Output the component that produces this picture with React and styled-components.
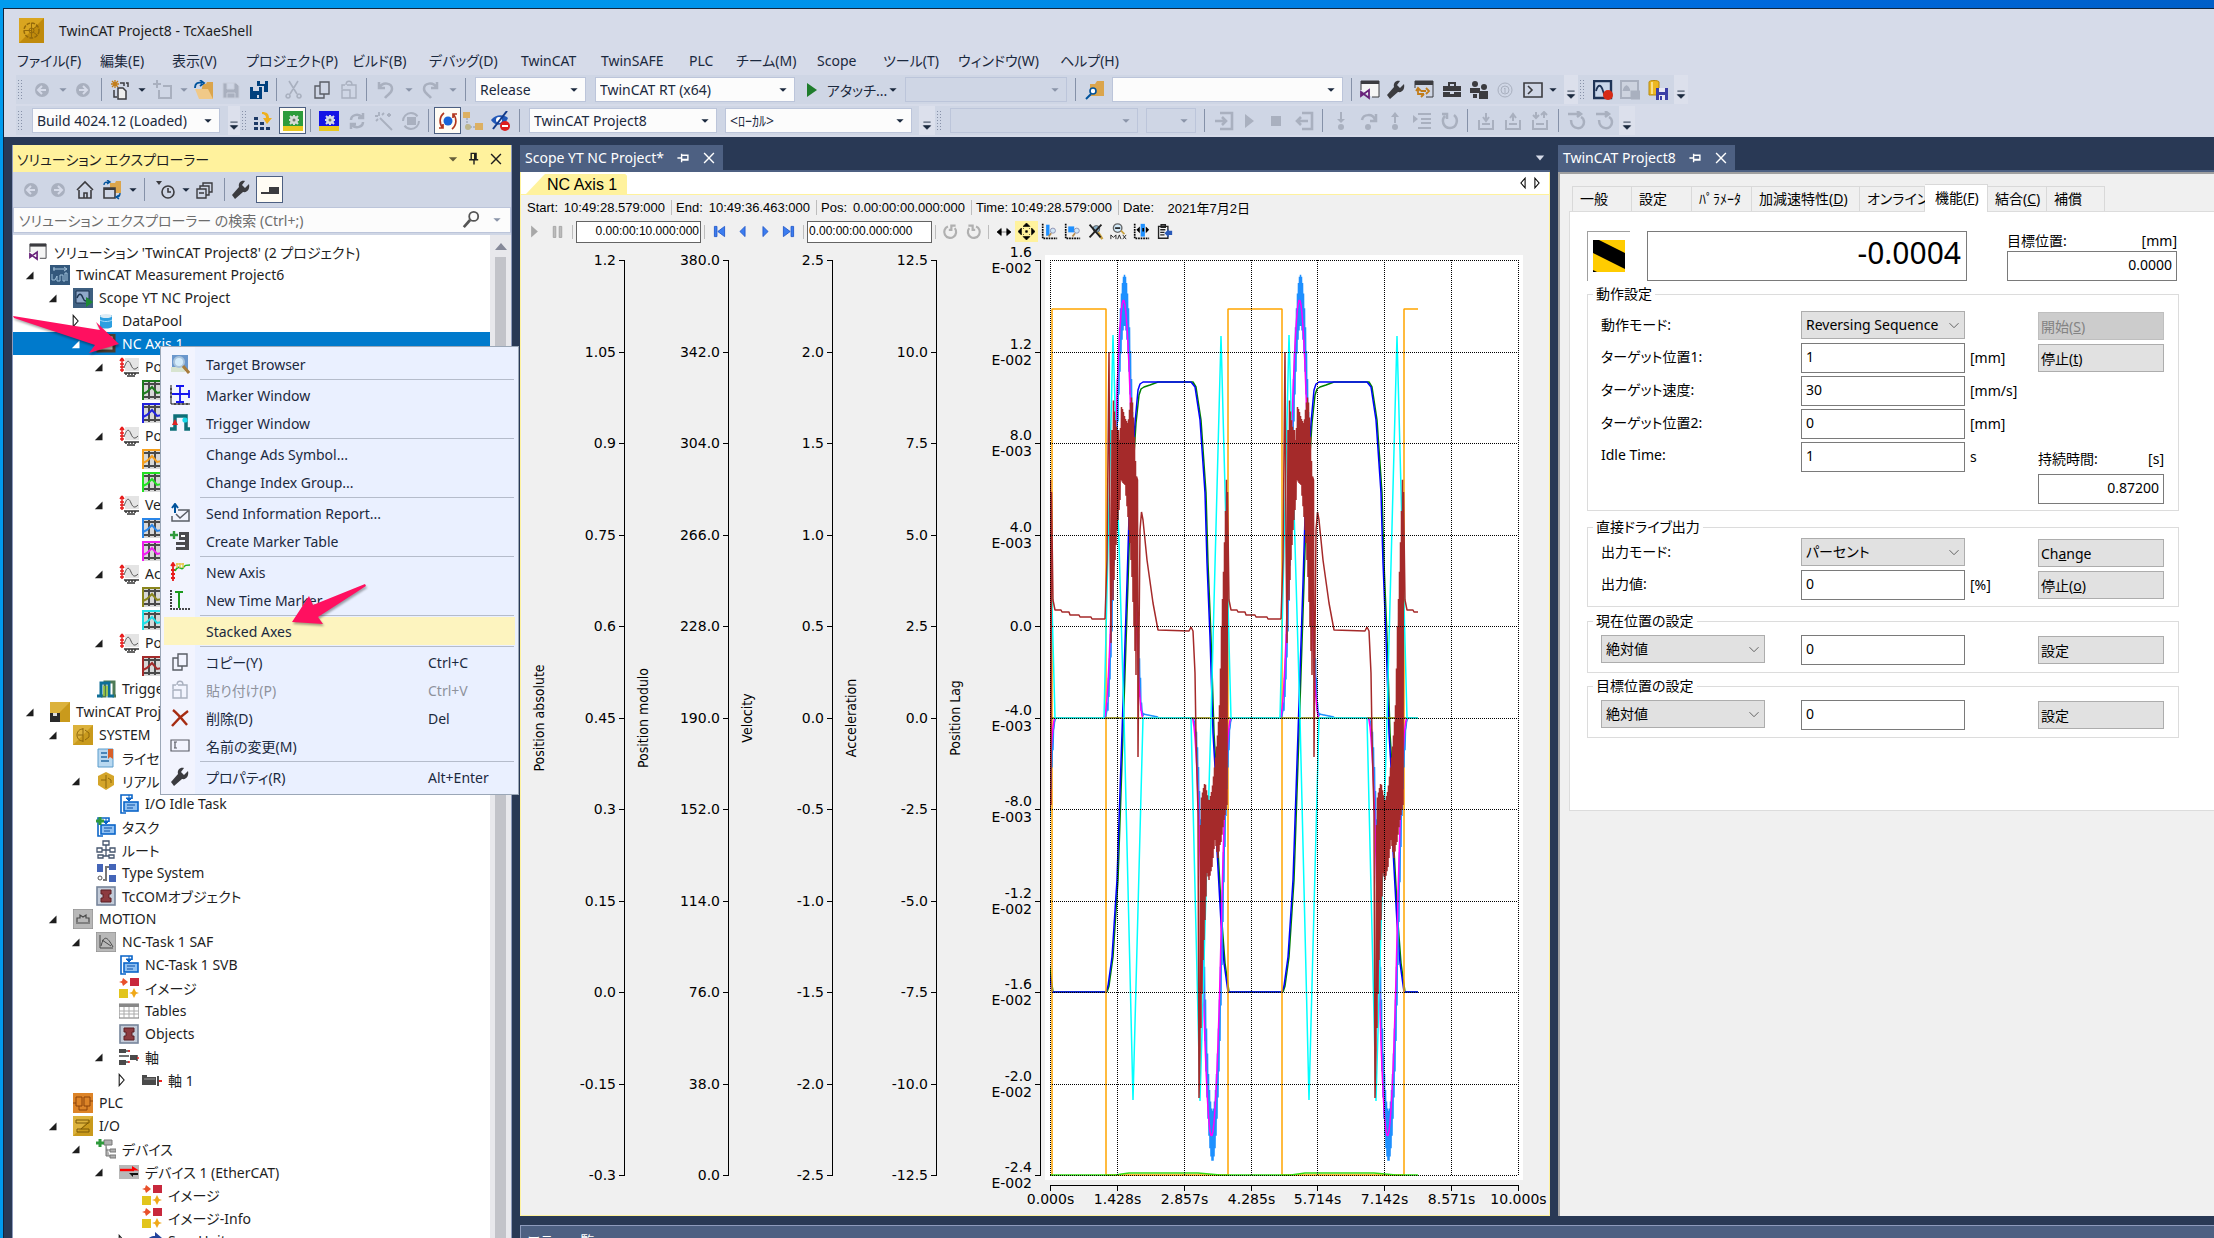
import React, { Component } from 'react';
import styled, { createGlobalStyle, css } from 'styled-components';

const uiFont = "'Noto Sans', 'Noto Sans CJK JP', sans-serif";
const scopeFont = "'Liberation Sans', 'Noto Sans CJK JP', sans-serif";

const GlobalStyle = createGlobalStyle`
  * {
    box-sizing: border-box;
  }

  body {
    margin: 0;
    overflow: hidden;
    font-family: ${uiFont};
    font-size: 14px;
    font-feature-settings: 'palt';
    color: #1e1e1e;
  }

  button, input, select {
    font: inherit;
    font-feature-settings: inherit;
    color: inherit;
    margin: 0;
    border-radius: 0;
  }

  button {
    border: 0;
    padding: 0;
    background: none;
  }
`;

/* ---------- shell ---------- */

const Desktop = styled.div`
  height: 100vh;
  padding: 8px 0 0 3px;
  background: linear-gradient(90deg, #009bee 0%, #0092ea 40%, #0069dc 80%, #005fc8 100%);
`;

const Window = styled.div`
  height: 100%;
  display: flex;
  flex-direction: column;
  border-top: 1px solid #10263f;
  border-left: 1px solid #10263f;
  background: #293955;
`;

const Header = styled.header`
  flex: none;
  padding-bottom: 2px;
  background: #d6dbe9;
`;

const TitleBar = styled.div`
  display: flex;
  align-items: center;
  gap: 15px;
  height: 42px;
  padding-left: 15px;
`;

const MenuBar = styled.nav`
  display: flex;
  height: 21px;
  margin-bottom: 3px;
  padding: 0 0 2px 13px;
`;

const MenuButton = styled.button`
  width: ${props => props.$w}px;
  flex: none;
  text-align: left;
  white-space: nowrap;
  line-height: 19px;
  color: #1b293e;
`;

const ToolRow = styled.div`
  display: flex;
  width: fit-content;
  height: 29px;
  margin: 0 0 2px 12px;
  background: #cfd6e5;

  &:last-child {
    margin-bottom: 0;
  }
`;

const Spacer = styled.span`
  flex: none;
  width: ${props => props.$w}px;
`;

const Grip = styled.span`
  flex: none;
  width: 5px;
  margin: 4px 3px 4px 1px;
  background-image: radial-gradient(#8791a8 1px, transparent 1px);
  background-size: 3px 3px;
`;

const Divider = styled.span`
  flex: none;
  display: flex;
  justify-content: center;
  width: ${props => props.$w}px;

  &::after {
    content: '';
    width: 1px;
    margin: 3px 0;
    background: #8591a8;
  }
`;

const ToolButton = styled.button`
  flex: none;
  display: flex;
  align-items: center;
  justify-content: center;
  width: ${props => props.$w}px;
  height: 29px;
  white-space: nowrap;
  color: #1b293e;

  ${props => props.$pressed && css`
    height: 27px;
    align-self: center;
    border: 1px solid #4d6082;
    background: #fffcf4;
  `}
`;

const OverflowButton = styled(ToolButton)`
  align-items: flex-end;
  padding-bottom: 3px;
  background: #dce0ec;
`;

const ComboWrap = styled.span`
  flex: none;
  display: grid;
  align-self: center;
  align-items: center;
  width: ${props => props.$w}px;
  height: 25px;

  > * {
    grid-area: 1 / 1;
  }

  > svg {
    justify-self: end;
    margin-right: 3px;
    pointer-events: none;
  }
`;

const Combo = styled.select`
  appearance: none;
  width: 100%;
  height: 25px;
  padding: 0 18px 0 4px;
  border: 1px solid #bcc5da;
  background: #fcfcfc;
  line-height: 20px;
  color: #1b293e;
  opacity: 1;

  &:disabled {
    background: #cfd6e5;
  }
`;

const Workspace = styled.main`
  flex: 1;
  min-height: 0;
  display: grid;
  grid-template-columns: 500px minmax(0, 1fr);
  gap: 8px;
  padding: 8px 0 0 8px;
`;

const DocumentArea = styled.div`
  min-height: 0;
  display: grid;
  grid-template-rows: minmax(0, 1fr) 13px;
  gap: 9px;
`;

const Documents = styled.div`
  min-height: 0;
  display: grid;
  grid-template-columns: minmax(0, 1030fr) minmax(0, 656fr);
  gap: 8px;
`;

const BottomDock = styled.div`
  overflow: hidden;
  padding: 4px 6px 0;
  border: 1px solid #8e9bbc;
  border-width: 1px 0 0 1px;
  background: #4d6082;
  color: #fff;
  line-height: 21px;
`;

/* ---------- solution explorer ---------- */

const Panel = styled.aside`
  position: relative;
  min-height: 0;
  display: flex;
  flex-direction: column;
  border: 1px solid #8e9bbc;
  border-width: 0 1px;
  background: #cfd6e5;
`;

const PanelTitle = styled.div`
  flex: none;
  display: flex;
  align-items: center;
  gap: 8px;
  height: 27px;
  padding: 0 8px 0 4px;
  background: #fff29d;

  > span {
    flex: 1;
  }
`;

const PanelTools = styled.div`
  flex: none;
  display: flex;
  align-items: center;
  height: 35px;
  padding-left: 4px;
`;

const Search = styled.label`
  flex: none;
  display: flex;
  align-items: center;
  gap: 8px;
  height: 26px;
  padding: 0 4px 0 5px;
  border: 1px solid #bcc5da;
  background: #fcfcfc;

  input {
    flex: 1;
    min-width: 0;
    border: 0;
    padding: 0;
    background: none;
  }

  input::placeholder {
    color: #6d6d6d;
    opacity: 1;
  }
`;

const TreeArea = styled.div`
  flex: 1;
  min-height: 0;
  display: flex;
  overflow: hidden;
  margin-top: 2px;
  background: #fff;
`;

const Tree = styled.ul`
  flex: 1;
  margin: 0;
  padding: 5px 0 0;
  list-style: none;
`;

const TreeRow = styled.li`
  display: flex;
  align-items: center;
  height: 23px;
  padding-left: ${props => props.$level * 23 - 13}px;
  white-space: nowrap;
  color: ${props => props.$selected ? '#fff' : '#1e1e1e'};
  background: ${props => props.$selected ? '#007acc' : 'none'};

  > svg:nth-last-child(2) {
    margin: 0 6px 0 13px;
  }
`;

const RootRow = styled.li`
  display: flex;
  align-items: center;
  gap: 7px;
  height: 23px;
  padding-left: 16px;
  white-space: nowrap;
`;

const ScrollBar = styled.div`
  display: flex;
  flex-direction: column;
  align-items: center;
  gap: 6px;
  width: 21px;
  padding-top: 8px;
  background: #e8e8ec;
`;

const Thumb = styled.div`
  flex: 1;
  width: 11px;
  background: #c2c3c9;
`;

/* ---------- context menu ---------- */

const ContextMenu = styled.div`
  position: absolute;
  z-index: 2;
  top: 201px;
  left: 147px;
  width: 359px;
  padding: 3px 3px;
  border: 1px solid #9ba7b7;
  background: linear-gradient(90deg, #f2f4fe 34px, #eaf0ff 34px);
`;

const ContextItem = styled.button`
  display: grid;
  grid-template-columns: 31px 1fr 87px;
  column-gap: 6px;
  align-items: center;
  width: 100%;
  height: 28px;
  text-align: left;
  color: #1b293e;
  background: ${props => props.$active ? '#fdf4bf' : 'none'};

  > :first-child {
    justify-self: center;
  }

  > :nth-child(2) {
    padding-left: 5px;
  }

  &:disabled {
    color: #8e929c;
  }
`;

const ContextSeparator = styled.hr`
  height: 1px;
  margin: 1px 1px 1px 36px;
  border: 0;
  background: #b5bccb;
`;

const Pointers = styled.svg`
  position: absolute;
  z-index: 3;
  top: 165px;
  left: 0;
  pointer-events: none;
  filter: drop-shadow(1px 2px 1px rgba(0, 0, 0, 0.35));
`;

/* ---------- documents ---------- */

const Doc = styled.section`
  min-height: 0;
  display: flex;
  flex-direction: column;
`;

const DocTabs = styled.div`
  flex: none;
  display: flex;
  align-items: center;
  justify-content: space-between;
  height: 27px;
  padding-right: 4px;
  border-bottom: 2px solid #4d6082;
`;

const DocTab = styled.div`
  display: flex;
  align-items: center;
  gap: 12px;
  height: 25px;
  padding: 0 7px 0 5px;
  background: #4d6082;
  color: #fff;
  white-space: nowrap;
`;

const ScopeBody = styled.div`
  flex: 1;
  min-height: 0;
  display: flex;
  flex-direction: column;
  border: 1px solid #fff29d;
  border-width: 0 1px 1px;
  background: #f0f0f0;
  font-family: ${scopeFont};
  font-size: 13px;
  color: #000;
`;

const ChartTabs = styled.div`
  flex: none;
  display: flex;
  justify-content: space-between;
  align-items: flex-end;
  height: 23px;
  padding: 0 5px;
  border-bottom: 1px solid #fff29d;
  background: #fff;

  > span {
    display: flex;
    align-self: center;
  }
`;

const ChartTab = styled.button`
  height: 20px;
  padding: 2px 10px 0 21px;
  font-size: 16px;
  line-height: 18px;
  background: #fff29d;
  clip-path: polygon(16px 3px, 19px 0, calc(100% - 2px) 0, 100% 2px, 100% 100%, 0 100%);
`;

const ScopeStatus = styled.div`
  flex: none;
  display: flex;
  align-items: center;
  height: 24px;
  padding-left: 2px;
`;

const StatusItem = styled.span`
  display: flex;
  width: ${props => props.$w}px;
  height: 15px;
  align-items: center;
  padding-left: 4px;
  white-space: nowrap;

  & + & {
    border-left: 1px solid #bdbdbd;
  }

  span {
    flex: 1;
    padding-right: 6px;
    text-align: right;
  }
`;

const ScopeTools = styled.div`
  flex: none;
  display: flex;
  align-items: center;
  height: 27px;
  padding: 0 0 2px 2px;
`;

const TimeInput = styled.input`
  width: 125px;
  height: 22px;
  padding: 0 1px 2px;
  border: 1px solid #646464;
  background: #fff;
  font-size: 12px;
  text-align: ${props => props.$right ? 'right' : 'left'};
`;

const ScopeDivider = styled.span`
  width: 1px;
  height: 14px;
  margin: 0 3px;
  background: #bdbdbd;
`;

const ScopeButton = styled.button`
  display: grid;
  place-items: center;
  width: 23px;
  height: 21px;
  background: ${props => props.$active ? '#fff29d' : 'none'};
`;

const Chart = styled.svg`
  display: block;
  width: 100%;
  min-height: 0;
  flex: 1;
  font-family: 'DejaVu Sans', sans-serif;
  font-size: 14px;
`;

/* ---------- axis function page ---------- */

const AxisBody = styled.div`
  flex: 1;
  padding: 10px 0 0 9px;
  border: 2px solid #a0a0a0;
  border-width: 2px 0 0 2px;
  background: #f0f0f0;
  color: #000;
`;

const PageTabs = styled.div`
  display: flex;
  align-items: flex-end;
  height: 27px;
  padding-left: 3px;
`;

const PageTab = styled.button`
  width: ${props => props.$w}px;
  height: 25px;
  flex: none;
  padding: 0 0 2px 7px;
  border: 1px solid #d9d9d9;
  border-width: 1px 1px 0 0;
  text-align: left;
  white-space: nowrap;

  &:first-child {
    border-left-width: 1px;
  }

  ${props => props.$active && css`
    position: relative;
    height: 28px;
    margin-bottom: -1px;
    padding: 0 0 4px 10px;
    background: #fff;
  `}
`;

const Page = styled.div`
  padding: 19px 0 69px 17px;
  border: 1px solid #dcdcdc;
  border-right: 0;
  background: #fff;
`;

const Readout = styled.div`
  display: flex;
  align-items: stretch;
  height: 50px;
  margin-bottom: 3px;
`;

const Stripe = styled.div`
  width: 43px;
  padding: 8px 5px;
  border: 1px solid #a0a0a0;
  border-width: 1px 0 0 1px;
`;

const Position = styled.output`
  width: 320px;
  margin: 0 40px 0 17px;
  padding-right: 5px;
  border: 1px solid #7a7a7a;
  font-size: 30px;
  line-height: 42px;
  text-align: right;
`;

const Field = styled.label`
  display: flex;
  flex-wrap: wrap;
  justify-content: space-between;
  align-content: space-between;
  width: ${props => props.$w}px;
  line-height: 20px;
`;

const Group = styled.fieldset`
  display: grid;
  grid-template-columns: 200px 164px 73px 126px;
  row-gap: 3px;
  width: 592px;
  margin: 0 0 ${props => props.$after || 3}px;
  padding: ${props => props.$pad};
  border: 1px solid #dcdcdc;

  legend {
    margin-left: -8px;
    padding: 0 3px;
    line-height: 20px;
  }
`;

const Caption = styled.label`
  padding-top: 3px;
  white-space: nowrap;
`;

const Unit = styled.span`
  padding: 5px 0 0 5px;
`;

const TextBox = styled.input`
  width: 100%;
  height: 30px;
  padding: 0 4px 4px;
  border: 1px solid #7a7a7a;
  background: #fff;
  text-align: ${props => props.$right ? 'right' : 'left'};
`;

const DropWrap = styled(ComboWrap)`
  height: 28px;
  align-self: start;

  > svg {
    margin-right: 2px;
  }
`;

const Drop = styled(Combo)`
  height: 28px;
  border-color: #adadad;
  background: #e1e1e1;
  color: #000;
`;

const PushButton = styled.button`
  height: 28px;
  margin-top: 1px;
  padding-left: 2px;
  border: 1px solid #adadad;
  background: #e1e1e1;
  text-align: left;

  &:disabled {
    border-color: #bfbfbf;
    background: #cccccc;
    color: #838383;
  }
`;

const Duration = styled(Field)`
  grid-column: 4;
  grid-row: 5 / span 2;
  row-gap: 5px;
  padding-top: 7px;
`;

/* ---------- icons, all on a 20 x 20 grid ---------- */

const grey = '#a9b0bf';
const dark = '#3b3b3f';

const miniPlot = color => (
  <g>
    <rect width="20" height="20" fill="#d8d8d8" />
    <path d="M0 1h20M1 0v20" stroke={color} strokeWidth="2" />
    <path d="M2 4h18M2 17h18M7 2v17M13 2v17M19 2v17" stroke="#4a4a4a" strokeWidth="2" fill="none" />
    <path d="M1 14l4-2 5-5 5 6 5-1" stroke={color} strokeWidth="2" fill="none" />
  </g>
);

const goldBox = inner => (
  <g>
    <rect width="20" height="20" fill="#c99a1c" />
    <path d="M0 0h20L0 20z" fill="#dcb23c" />
    {inner}
  </g>
);

const gear = (x, y, r, color) => (
  <g fill={color}>
    <circle cx={x} cy={y} r={r} />
    <path
      d={`M${x - r - 1} ${y}h${2 * r + 2}M${x} ${y - r - 1}v${2 * r + 2}M${x - r} ${y - r}l${2 * r} ${2 * r}M${x + r} ${y - r}l${-2 * r} ${2 * r}`}
      stroke={color}
      strokeWidth="2"
    />
    <circle cx={x} cy={y} r="1.5" fill="#6d7a70" />
  </g>
);

const colorBlocks = (
  <g>
    <path d="M4 0l5 4-5 4-1-3-3-1 3-1z" fill="#e8502a" />
    <rect x="11" y="0" width="9" height="8" fill="#c8283c" />
    <rect x="0" y="11" width="9" height="9" fill="#e2c51c" />
    <path d="M15 10l2 4 3 1-3 1-2 4-2-4-3-1 3-1z" fill="#f0a818" />
  </g>
);

const taskIcon = (
  <g>
    <path d="M7 19H2V1h11v4" fill="none" stroke="#0a64c8" strokeWidth="1.6" />
    <path d="M10 1v4M7 4l3 3 3-3z" fill="#0a64c8" stroke="#0a64c8" />
    <rect x="5" y="8" width="14" height="9" fill="#8fc0f2" stroke="#0a64c8" strokeWidth="1.6" />
    <path d="M8 11h8M8 14h6" stroke="#0a50a8" strokeWidth="1.2" />
  </g>
);

const objectIcon = (
  <g>
    <rect x="1" y="1" width="18" height="18" fill="#c3cbd8" stroke="#77859b" strokeWidth="1.6" />
    <path d="M5 4h10v4h-2v4h2v4H5v-4h2V8H5z" fill="#8d3b40" stroke="#5c1e22" />
  </g>
);

const axisGroup = (
  <g>
    <rect x="6" y="1" width="14" height="13" fill="#e4e4e4" />
    <path d="M3 1v14M3 1L1 4M3 1l2 3M1 7h4M1 10h4M1 13h4" stroke="#e81c1c" strokeWidth="1.5" fill="none" />
    <path d="M5 11c3-9 5-8 7-3s4 5 7 2" stroke="#555" fill="none" />
    <path d="M5 16h15M7 16v2M10 16v2M13 16v2M16 16v2M8 19h8" stroke="#333" strokeWidth="1.5" />
  </g>
);

const ICONS = {
  logo: (
    <g>
      <rect width="20" height="20" fill="#d9a520" />
      <path d="M0 20L20 0v20z" fill="#c08a0c" />
      <circle cx="10" cy="10" r="6" fill="none" stroke="#94690a" strokeWidth="1.2" strokeDasharray="3 1" />
      <circle cx="10" cy="10" r="2" fill="none" stroke="#94690a" strokeWidth="0.8" />
      <path d="M10 4v12M10 10H4M11 9l4-3M11 11l4 3" stroke="#94690a" strokeWidth="0.8" />
    </g>
  ),
  back: <g><circle cx="10" cy="10" r="7" fill={grey} /><path d="M14 10H7m3-4l-4 4 4 4" stroke="#d6dbe9" strokeWidth="2" fill="none" /></g>,
  forward: <g><circle cx="10" cy="10" r="7" fill={grey} /><path d="M6 10h7m-3-4l4 4-4 4" stroke="#d6dbe9" strokeWidth="2" fill="none" /></g>,
  newProject: (
    <g fill="none">
      <path d="M5 0v8M1 4h8M2 1l6 6M8 1L2 7" stroke="#c27d1a" strokeWidth="1.3" />
      <path d="M10 3h4v3M4 10v7h3M16 3h2v4" stroke={dark} strokeWidth="1.5" />
      <path d="M8 8h5l3 3v8H8z" stroke={dark} strokeWidth="1.5" fill="#eee" />
    </g>
  ),
  addItem: <path d="M4 0v8M0 4h8M10 6h8v12H6V10" fill="none" stroke={grey} strokeWidth="2" />,
  open: (
    <g>
      <path d="M9 4h3l1-2h6v17H5z" fill="#dba54c" />
      <path d="M1 9h13l5 10H5z" fill="#f0c988" />
      <path d="M1 8c0-5 3-6 7-5M6 0l4 3-4 3" fill="none" stroke="#00539c" strokeWidth="1.8" />
    </g>
  ),
  save: <path d="M2 3h13l3 3v12H2zM6 3v6h7V3M6 18v-5h8v5" fill={grey} stroke="#c8cedb" />,
  saveAll: (
    <g fill="#00407d">
      <path d="M8 1h11v11h-4V6H8z" />
      <path d="M1 7h12v12H1z" />
      <path d="M4 7h6v4H4zM11 1h5v3h-5zM8 15h2v3H8z" fill="#cfd6e5" />
    </g>
  ),
  cut: <path d="M5 1l8 13M14 1L6 14M4 14a2 2 0 1 0 .1 0M15 14a2 2 0 1 0 .1 0" fill="none" stroke={grey} strokeWidth="1.6" />,
  copy: <path d="M8 2h9v12H8zM8 6H3v12h9v-4" fill="none" stroke="#5a5d66" strokeWidth="1.4" />,
  paste: <path d="M6 5H3v4M8 5h9v13h-6M7 5c0-5 6-5 6 0M3 10h8v8H3z" fill="none" stroke={grey} strokeWidth="1.4" />,
  undo: <path d="M3 2v6h6M3 8c4-7 13-5 13 1 0 4-4 5-7 9" fill="none" stroke={grey} strokeWidth="2.5" />,
  redo: <path d="M17 2v6h-6M17 8C13 1 4 3 4 9c0 4 4 5 7 9" fill="none" stroke={grey} strokeWidth="2.5" />,
  play: <path d="M5 3l10 7-10 7z" fill="#1f7d2c" />,
  findFolder: (
    <g>
      <path d="M5 4h5l2-3h7v15H5z" fill="#dba54c" />
      <circle cx="8" cy="11" r="3" fill="#fff" stroke="#00539c" strokeWidth="1.6" />
      <path d="M6 14l-5 5" stroke="#00539c" strokeWidth="2" />
    </g>
  ),
  vs: (
    <g>
      <path d="M1 10V1h18v16h-7" fill="#f5f5f5" stroke={dark} strokeWidth="1" />
      <path d="M1 1h18v3H1z" fill={dark} />
      <path d="M1 12l8 6v-8l-8 6z" fill="none" stroke="#68217a" strokeWidth="1.8" />
    </g>
  ),
  wrench: <path d="M18 4l-4 4-3-3 3-4c-4-1-7 2-6 6l-7 8 3 4 8-7c5 1 7-4 6-8z" fill={dark} />,
  exportWindow: (
    <g>
      <path d="M1 8V1h18v16h-7" fill="none" stroke={dark} />
      <path d="M1 1h18v4H1z" fill={dark} />
      <path d="M4 8v6h6M7 11h5M12 8l3 3-3 3M2 11l2-3 3 3M7 17l3-3" fill="none" stroke="#c27d1a" strokeWidth="1.8" />
    </g>
  ),
  toolbox: <path d="M1 6h5V2h8v4h5v5H1zM8 6h4V4H8zM1 12h7v2h4v-2h7v5H1z" fill={dark} fillRule="evenodd" />,
  people: <g fill={dark}><circle cx="6" cy="4" r="3" /><circle cx="15" cy="7" r="3" /><path d="M1 8h10v5H1zM10 11h9v8h-9zM4 14h4v4H4z" /></g>,
  target: <g fill="none" stroke={grey} strokeWidth="1"><circle cx="10" cy="10" r="7" /><circle cx="10" cy="10" r="4" /><path d="M10 8v5M9 9l1-1" /></g>,
  console: <path d="M1 3h18v14H1zM5 6l4 4-4 4" fill="none" stroke={dark} strokeWidth="1.6" />,
  record: (
    <g>
      <path d="M1 1h17v17H1z" fill="#c9d6ea" stroke="#1f3457" strokeWidth="2.4" />
      <path d="M3 11c2-7 5-7 7 0s4 5 6 1" stroke="#1f3457" strokeWidth="1.8" fill="none" />
      <circle cx="15" cy="15" r="5" fill="#d62a16" />
    </g>
  ),
  recordOff: <g><path d="M1 1h17v17H1z" fill="#cdd3df" stroke={grey} strokeWidth="2" /><path d="M3 11c2-7 5-7 7 0M11 11h9v8h-9z" stroke={grey} fill={grey} /></g>,
  dbSave: (
    <g>
      <path d="M1 2c0-2 10-2 10 0v13H1z" fill="#edb821" stroke="#b58a10" />
      <path d="M3 2h2v12H3z" fill="#f8e08a" />
      <path d="M8 8h12v12H8z" fill="#3c3fa6" />
      <path d="M11 8h6v4h-6zM11 15h6v5h-6z" fill="#e8e8f4" />
      <path d="M12 16h2v4h-2z" fill="#3c3fa6" />
    </g>
  ),
  overflow: <path d="M6 9h8M6 13h8l-4 4z" fill="#1b293e" stroke="#1b293e" strokeWidth="1" />,
  caret: <path d="M6 8h8l-4 4z" fill="#1b293e" />,
  caretGrey: <path d="M6 8h8l-4 4z" fill="#8a94a8" />,
  caretBig: <path d="M3 7h14l-7 7z" fill="#665f3a" />,
  chevron: <path d="M5 8l5 5 5-5" fill="none" stroke="#555" strokeWidth="1" />,
  activate: (
    <g>
      <path d="M1 6h4v3H1zM1 11h4v3H1zM1 16h4v3H1zM7 11h4v3H7zM7 16h4v3H7zM13 16h4v3h-4z" fill="#1d3a66" />
      <path d="M9 1c5 0 7 2 7 6h3l-5 6-4-6h3c0-3-2-4-4-4z" fill="#efb01c" />
    </g>
  ),
  runMode: <g><rect width="20" height="20" fill="#2e9c3c" /><path d="M0 15h20v5H0z" fill="#e8c821" />{gear(11, 9, 4, '#d6dbd8')}</g>,
  configMode: <g><rect width="20" height="20" fill="#1414e6" /><path d="M0 15h20v5H0z" fill="#e8c821" />{gear(11, 9, 4, '#d6dbe8')}</g>,
  reload: <path d="M4 9c0-5 7-7 11-3M16 2v5h-5M16 11c0 5-7 7-11 3M4 18v-5h5" fill="none" stroke={grey} strokeWidth="2.5" />,
  wand: <path d="M6 7l12 12M5 1v4M1 5h3M10 2L8 4M2 10l2-2M13 4h4M15 2v4" fill="none" stroke={grey} strokeWidth="1.8" />,
  scan: <g fill="none" stroke={grey} strokeWidth="2"><circle cx="10" cy="10" r="8" strokeDasharray="20 5" /><path d="M7 7h7v6H7z" fill={grey} /></g>,
  free: (
    <g>
      <circle cx="10" cy="10" r="4.5" fill="#1764d8" />
      <path d="M6 2C1 6 1 13 5 17M1 17h4v-4M14 18c5-4 5-11 1-15M19 3h-4v4" fill="none" stroke="#b2361e" strokeWidth="1.7" />
    </g>
  ),
  subtree: (
    <g>
      <path d="M0 1h7v6H0zM12 12h8v7h-8z" fill="#dcb063" />
      <path d="M4 7v9h8" fill="none" stroke="#8a94a8" strokeDasharray="2 1" />
      <circle cx="5" cy="16" r="3" fill="#bdb68c" />
    </g>
  ),
  hide: (
    <g>
      <path d="M1 9c4-6 13-6 17-2-3 8-13 9-17 2z" fill="#2258b8" />
      <circle cx="9" cy="9" r="3" fill="#fff" />
      <path d="M17 0L3 18" stroke="#123a8a" strokeWidth="2" />
      <circle cx="15" cy="15" r="5" fill="#dc1e1e" />
      <path d="M12 15h6" stroke="#fff" strokeWidth="2" />
    </g>
  ),
  login: <path d="M6 2h12v16H6M1 10h11M8 6l4 4-4 4" fill="none" stroke={grey} strokeWidth="2.6" />,
  logout: <path d="M8 2h10v16H8M14 10H3M7 6l-4 4 4 4" fill="none" stroke={grey} strokeWidth="2.6" />,
  playGrey: <path d="M6 3l9 7-9 7z" fill={grey} />,
  stop: <rect x="5" y="5" width="10" height="10" fill={grey} />,
  stepIn: <g fill={grey}><path d="M9 1h2v7h3l-4 4-4-4h3z" /><circle cx="10" cy="16" r="3" /></g>,
  stepOver: <g><path d="M3 9c1-6 11-7 13 0M17 3v7h-6" fill="none" stroke={grey} strokeWidth="2.5" /><circle cx="9" cy="16" r="3" fill={grey} /></g>,
  stepOut: <g fill={grey}><path d="M10 1l4 5h-3v6H9V6H6z" /><circle cx="10" cy="16" r="3" /></g>,
  cursor: <g><path d="M1 4l5 4-5 4z" fill={grey} /><path d="M6 3h13M9 8h10M9 12h10M6 17h13" stroke={grey} strokeWidth="2" /></g>,
  reset: <path d="M14 4c5 4 3 13-4 13S1 9 5 5M2 3h5v5" fill="none" stroke={grey} strokeWidth="2.5" />,
  download: <path d="M3 9v9h14V9M6 13h8M10 2v7M7 6l3 4 3-4" fill="none" stroke={grey} strokeWidth="2" />,
  upload: <path d="M3 9v9h14V9M6 13h8M10 10V4M7 7l3-4 3 4" fill="none" stroke={grey} strokeWidth="2" />,
  exchange: <path d="M3 9v9h14V9M6 13h8M6 1v5M3 4l3 3 3-3M14 7V2M11 4l3-3 3 3" fill="none" stroke={grey} strokeWidth="2" />,
  cycle: <path d="M1 3h11M10 0l4 3-4 3M4 9c0 10 13 11 13 2 0-2-1-4-3-5" fill="none" stroke={grey} strokeWidth="2.5" />,
  home: <path d="M2 10l8-8 8 8M4 10v8h12v-8M9 18v-5h3v5" fill="none" stroke={dark} strokeWidth="1.6" />,
  sync: (
    <g>
      <path d="M8 3h5l1-2h5v12H8z" fill="#dba54c" />
      <path d="M2 8h11v10H2z" fill="#cfd6e5" stroke={dark} strokeWidth="1.6" />
      <path d="M2 8h11v2H2z" fill={dark} />
      <path d="M2 5c0-3 2-3 5-3M5 0l3 2-3 2M18 13c0 3-1 4-3 4M17 15l-3 2 3 2" fill="none" stroke="#00539c" strokeWidth="1.4" />
    </g>
  ),
  pending: <g fill="none" stroke={dark} strokeWidth="1.6"><circle cx="12" cy="12" r="6" /><path d="M12 8v4h3" /><path d="M0 1h6L3 5z" fill={dark} stroke="none" /></g>,
  collapse: <path d="M2 9h9v9H2zM5 9V6h9v9h-3M8 6V3h9v9h-3M4 13h5" fill="none" stroke={dark} strokeWidth="1.4" />,
  preview: <path d="M1 12h8V7h10v7H1z" fill={dark} />,
  search: <g fill="none" stroke="#555"><circle cx="13" cy="6" r="5" strokeWidth="2" /><path d="M9 10l-7 8" strokeWidth="3" /></g>,
  close: <path d="M3 3l14 14M17 3L3 17" stroke="currentColor" strokeWidth="2" />,
  pin: <path d="M6 2h7v9H6zM11 2v9M3 11h13M10 11v7" fill="none" stroke="currentColor" strokeWidth="2" />,
  pinSide: <path d="M2 10h6M8 4v12M8 6h9v7H8M8 12h9" fill="none" stroke="currentColor" strokeWidth="2" />,
  caretWhite: <path d="M3 6h14l-7 8z" fill="#d6dbe9" />,
  opened: <path d="M15 5v11H4z" fill="#1e1e1e" />,
  openedWhite: <path d="M15 5v11H4z" fill="#fff" />,
  closed: <path d="M6 2l7 8-7 8z" fill="#fff" stroke="#1e1e1e" strokeWidth="1.6" />,
  measurement: (
    <g>
      <rect width="20" height="20" fill="#33587c" />
      <path d="M3 4h13M4 2v4M14 2l3 2-3 2" stroke="#a9c6dd" strokeWidth="1" fill="none" />
      <path d="M2 9v6h3l2-4v5h3v-6h3v6h2V8h2v8" stroke="#9fc0da" fill="none" />
    </g>
  ),
  scopeProject: (
    <g>
      <rect width="20" height="20" fill="#3e5f80" />
      <path d="M3 3h13v12H3z" fill="#8fa8c8" stroke="#1d3550" />
      <path d="M4 10c2-5 4-5 6 0s4 3 5 0" fill="none" stroke="#1d3550" strokeWidth="1.5" />
      <path d="M13 9l7 5-7 5z" fill="#1d8a34" />
    </g>
  ),
  dataPool: <g><path d="M4 4h12v12c-3 2-9 2-12 0z" fill="#2d9fe0" /><ellipse cx="10" cy="5" rx="6" ry="2" fill="#dcecf6" /><path d="M4 9c3 2 9 2 12 0" stroke="#a8dcf8" fill="none" /></g>,
  chart: <g><path d="M2 1h16v16H2z" fill="#d8d0c0" stroke="#4a3c30" strokeWidth="3" /><path d="M4 12c3-8 6-8 9 0" fill="none" stroke="#333" strokeWidth="2" /></g>,
  axisGroup,
  chGreen: miniPlot('#1d7a1d'),
  chBlue: miniPlot('#2222dd'),
  chOrange: miniPlot('#f5a01e'),
  chLime: miniPlot('#22e022'),
  chSky: miniPlot('#2a86e8'),
  chPink: miniPlot('#f01ef0'),
  chOlive: miniPlot('#8a861c'),
  chCyan: miniPlot('#1ee0e8'),
  chBrown: miniPlot('#a32a2a'),
  trigger: (
    <g fill="none">
      <path d="M5 17h4V3h9v14h2" stroke="#4d7a55" strokeWidth="3" />
      <path d="M1 17h4V4h8v13h5" stroke="#0e6f98" strokeWidth="3" />
      <path d="M8 17V7M11 7v10" stroke="#9bc93c" strokeWidth="1.6" />
    </g>
  ),
  tcProject: goldBox(<g><path d="M0 11h10v9H0z" fill="#2a2a2a" /><path d="M3 11h4v3H3z" fill="#ddd" /></g>),
  system: goldBox(<path d="M10 3v14M10 4c-8 0-8 12 0 12M10 10H5M12 5l4 3v4l-4 3" fill="none" stroke="#8d660a" strokeWidth="1" />),
  license: <g><path d="M2 1h15v18H2z" fill="#b8d8f0" stroke="#5a9ccc" /><path d="M5 5h6M5 9h6M5 13h8" stroke="#4a86b8" strokeWidth="2" /><path d="M12 1h5v10l-3-2-2 2z" fill="#d8602a" /></g>,
  realtime: <g><path d="M10 1l8 4v9l-8 5-8-5V5z" fill="#d4a52a" /><path d="M10 4v13M5 9h5M12 7l3 2v3" stroke="#8d660a" fill="none" /></g>,
  task: taskIcon,
  taskAdd: <g>{taskIcon}<path d="M4 0v8M0 4h8" stroke="#2f9a3c" strokeWidth="3" /></g>,
  route: <path d="M7 1h6v4H7zM1 8h5v4H1zM14 8h5v4h-5zM2 15h5v3H2zM13 15h5v3h-5zM10 5v11M6 10h8M7 16h6" fill="none" stroke="#46566e" strokeWidth="1.3" />,
  typeSystem: <g><path d="M1 1h6v8H1zM13 1h7v6h-7zM13 12h7v7h-7z" fill="#4465b8" /><circle cx="4" cy="15" r="2" fill="none" stroke="#555" /><path d="M7 17h3V4h3" fill="none" stroke="#777" strokeWidth="2" /></g>,
  object: objectIcon,
  motion: <g><path d="M0 0h20v20H0z" fill="#b8b8b8" stroke="#8a8a8a" /><path d="M3 14h14M4 13V9h3V6l3 2 3-2v3h3v4" fill="none" stroke="#484848" strokeWidth="1.2" /></g>,
  ncTask: <g><path d="M0 0h20v20H0z" fill="#b8b8b8" stroke="#8a8a8a" /><path d="M4 3v13h13M5 14c3-11 6-10 12 1M6 8l9 6" fill="none" stroke="#484848" /></g>,
  image: colorBlocks,
  tables: <g><path d="M0 3h20v14H0z" fill="#fff" stroke="#777" /><path d="M0 3h20v3H0z" fill="#888" /><path d="M0 10h20M0 13h20M5 6v11M10 6v11M15 6v11" stroke="#aaa" /></g>,
  axes: (
    <g>
      <path d="M0 2h7v4H0zM0 13h7v5H0zM11 8h7v5h-7z" fill="#4a4a4a" />
      <path d="M7 4h4M7 15h3M0 9h10M18 8v6" stroke="#444" strokeWidth="1.5" />
      <path d="M9 4h2M9 15h2M18 11h2" stroke="#e22" strokeWidth="1.5" />
    </g>
  ),
  axis: <g><path d="M0 7h14v8H0zM0 5h5v3H0zM15 6h2v10h-2z" fill="#4a4a4a" /><path d="M2 9h11" stroke="#999" /><path d="M17 11h3" stroke="#e22" strokeWidth="2" /></g>,
  plc: <g><path d="M0 0h20v20H0z" fill="#dd8428" /><path d="M3 4h6v9H3zM11 4h6v9h-6zM6 13v4h8v-4M0 10h3M17 8h3" fill="none" stroke="#8c4308" strokeWidth="1" /></g>,
  io: goldBox(<path d="M3 4h13v3H3zM15 7l-7 6M4 13h12v3H4z" fill="none" stroke="#7a5806" strokeWidth="1" />),
  devices: <g><path d="M8 1h8v5H8zM14 10h6v3h-6zM14 16h6v3h-6zM10 6v11h4M10 11h4" fill="#b0b0b0" stroke="#777" /><path d="M4 0v8M0 4h8" stroke="#2f9a3c" strokeWidth="3" /></g>,
  ethercat: <g><path d="M0 3h20v14H0z" fill="#b8b8b8" /><path d="M1 8h14" stroke="#f00" strokeWidth="2.4" /><path d="M13 4l7 4.5h-7z" fill="#f00" /><path d="M19 11H10l4 4v-2h5z" fill="#111" /></g>,
  syncUnit: <path d="M2 16C4 6 10 5 13 5V1l7 6-7 6V9c-4 0-7 2-11 7z" fill="#23449c" />,
  ctxBrowser: (
    <g>
      <path d="M2 1h16v16H2z" fill="#6a97cc" />
      <path d="M1 13h14v5H1z" fill="#d8e4d0" />
      <circle cx="9" cy="8" r="5" fill="#d4ecfb" stroke="#a9c3dc" strokeWidth="2" />
      <path d="M13 12l6 7" stroke="#a87c3c" strokeWidth="3" />
    </g>
  ),
  ctxMarker: <g><path d="M1 0v19h19M0 4h2M0 8h2M0 12h2M5 18v2M9 18v2M13 18v2M17 18v2" stroke="#111" fill="none" /><path d="M2 9h18M10 0v18M6 1h8M6 17h8M19 5v8" stroke="#1414f0" strokeWidth="1.8" /></g>,
  ctxTrigger: <g><path d="M0 16h5V3h11v13h4" fill="none" stroke="#0e6f78" strokeWidth="3.5" /><path d="M5 6l3 6H2z" fill="#d22" /><circle cx="15" cy="7" r="2.6" fill="#17d8ea" /></g>,
  ctxReport: <g fill="none"><path d="M8 7h11v11H2v-5M6 11l4 4 8-7" stroke="#5a5d66" strokeWidth="1.5" /><path d="M5 10V2M2 5l3-4 3 4" stroke="#00539c" strokeWidth="2" /></g>,
  ctxTable: <g><path d="M4 0v8M0 4h8" stroke="#2f9a3c" strokeWidth="2.4" /><path d="M9 1h10v18H6v-3h9v-2H6v-3h9V9H9z" fill="#4a4a4e" /><path d="M11 4h4v2h-4z" fill="#fff" /></g>,
  ctxAxis: <g fill="none"><path d="M3 1v18M1 4l2-3 2 3M1 8h4M1 12h4M1 16h4" stroke="#e81c1c" strokeWidth="1.8" /><path d="M5 9c4-8 6 0 8-3s3-3 7-3" stroke="#22b022" strokeWidth="1.6" /><path d="M7 1v5M10 1v5M13 1v5M6 2h8" stroke="#e8c84a" strokeWidth="1.4" /></g>,
  ctxTime: <g><path d="M1 0v19h19" stroke="#111" strokeDasharray="2 1" strokeWidth="1.6" fill="none" /><path d="M9 2v16M5 2h8" stroke="#1c9a1c" strokeWidth="2" /></g>,
  ctxDelete: <path d="M3 2c5 4 9 9 14 15M18 3C11 8 7 12 2 18" stroke="#a62c12" strokeWidth="2.4" fill="none" />,
  ctxRename: <path d="M1 4h18v11H1zM4 6h3M4 12h3M5 6v6" fill="none" stroke="#5a5d66" strokeWidth="1.2" />,
  scPlay: <path d="M6 3l8 7-8 7z" fill="#a8a8a8" />,
  scPause: <path d="M5 4h3v13H5zM12 4h3v13h-3z" fill="#bcbcbc" stroke="#a0a0a0" />,
  scFirst: <path d="M4 4h3v12H4zM16 4v12l-8-6z" fill="#3b7df0" stroke="#1f55c8" />,
  scPrev: <path d="M13 4v12l-6-6z" fill="#3b7df0" stroke="#1f55c8" />,
  scNext: <path d="M7 4v12l6-6z" fill="#3b7df0" stroke="#1f55c8" />,
  scLast: <path d="M13 4h3v12h-3zM4 4v12l8-6z" fill="#3b7df0" stroke="#1f55c8" />,
  scUndo: <path d="M7 4a7 7 0 1 0 8 2M8 8h3V3h5" fill="none" stroke="#b0b0b0" strokeWidth="2.6" />,
  scRedo: <path d="M13 4a7 7 0 1 1-8 2M12 8H9V3H4" fill="none" stroke="#b0b0b0" strokeWidth="2.6" />,
  scWidth: <path d="M0 10l6-5v10zM20 10l-6-5v10zM6 10h2M12 10h2M9 10h2" fill="#000" stroke="#000" />,
  scPan: <path d="M10 0l4 4H6zM10 20l4-4H6zM0 10l4-4v8zM20 10l-4-4v8zM9 9h2v2H9zM6 6l1 1M14 6l-1 1M6 14l1-1M14 14l-1-1" fill="#000" stroke="#000" strokeWidth="0.8" />,
  scZoomX: <g><path d="M2 1v17h17" fill="none" stroke="#000" strokeDasharray="2 1" strokeWidth="2" /><path d="M6 2h4v13H6z" fill="#1e90ff" /><circle cx="14" cy="9" r="3" fill="#cfe6f6" stroke="#88a" /><path d="M12 12l-3 4" stroke="#b58a4a" strokeWidth="2" /></g>,
  scZoomXY: <g><path d="M2 1v17h17" fill="none" stroke="#000" strokeDasharray="2 1" strokeWidth="2" /><path d="M5 4h7v7H5z" fill="#1e90ff" /><circle cx="15" cy="9" r="3" fill="#cfe6f6" stroke="#88a" /><path d="M13 12l-3 4" stroke="#b58a4a" strokeWidth="2" /></g>,
  scZoomOff: <g><circle cx="11" cy="7" r="4" fill="#8ab0c8" stroke="#555" /><path d="M13 11l5 8" stroke="#c8a03c" strokeWidth="3" /><path d="M3 2l13 15M17 2L3 17" stroke="#222" strokeWidth="2.2" /></g>,
  scZoomMax: <g><circle cx="9" cy="6" r="5" fill="#d4ecfb" stroke="#666" strokeWidth="1.6" /><path d="M6 6h6" stroke="#222" strokeWidth="2" /><path d="M13 9l4 4" stroke="#c8a03c" strokeWidth="2" /><path d="M1 19v-5l3 3 3-3v5M9 19l2-5 2 5M15 14l4 5M19 14l-4 5" stroke="#111" fill="none" /></g>,
  scCursor: <g><path d="M2 1v17h17" fill="none" stroke="#000" strokeDasharray="2 1" strokeWidth="2" /><path d="M9 1h5v15H9z" fill="#1e90ff" /><path d="M4 8l4-4v8zM19 8l-4-4v8zM11 6h2v4h-2z" fill="#000" /></g>,
  scClip: <g><path d="M3 4h11v14H3zM6 2h5v3H6zM5 8h6M5 11h5M5 14h5" fill="#f4f4f4" stroke="#222" strokeWidth="1.6" /><path d="M19 9v5h-4v3l-5-5 5-5v2z" fill="#2a5ab8" /></g>,
  arrowLeft: <path d="M13 3v14l-6-7z" fill="#fff" stroke="#000" strokeWidth="1.5" />,
  arrowRight: <path d="M7 3v14l6-7z" fill="#fff" stroke="#000" strokeWidth="1.5" />,
  none: null
};

const Svg = styled.svg`
  flex: none;
  display: block;
`;

const Icon = ({ name, size = 20 }) => (
  <Svg width={size} height={size} viewBox="0 0 20 20" aria-hidden="true">
    {ICONS[name]}
  </Svg>
);

/* ---------- toolbars ---------- */

const menus = [
  ['ファイル(F)', 83], ['編集(E)', 72], ['表示(V)', 74], ['プロジェクト(P)', 106], ['ビルド(B)', 77],
  ['デバッグ(D)', 92], ['TwinCAT', 80], ['TwinSAFE', 88], ['PLC', 47], ['チーム(M)', 81],
  ['Scope', 66], ['ツール(T)', 75], ['ウィンドウ(W)', 102], ['ヘルプ(H)', 60]
];

// [kind or icon name, width, value]
const standardBar = [
  ['grip'], ['back', 33], ['caretGrey', 10], ['forward', 29], ['sep', 8], ['newProject', 30], ['caret', 14],
  ['addItem', 27], ['caretGrey', 15], ['open', 26], ['save', 28], ['saveAll', 27], ['sep', 8], ['cut', 28],
  ['copy', 27], ['paste', 27], ['sep', 9], ['undo', 30], ['caretGrey', 15], ['redo', 28], ['caretGrey', 18],
  ['sep', 7], ['space', 6], ['combo', 111, 'Release'], ['space', 9], ['combo', 200, 'TwinCAT RT (x64)'],
  ['play', 34], ['text', 56, 'アタッチ...'], ['caret', 16], ['space', 4], ['comboOff', 162], ['sep', 16],
  ['findFolder', 24], ['space', 5], ['combo', 231, ''], ['sep', 16], ['vs', 22], ['wrench', 30],
  ['exportWindow', 26], ['toolbox', 30], ['people', 24], ['target', 28], ['console', 28], ['caret', 12],
  ['space', 5], ['overflow', 14], ['grip'], ['record', 32], ['recordOff', 22], ['dbSave', 33], ['overflow', 14]
];

const twincatBar = [
  ['grip'], ['space', 7], ['combo', 188, 'Build 4024.12 (Loaded)'], ['space', 8], ['overflow', 12], ['grip'],
  ['activate', 27], ['space', 3], ['runMode', 27, 'on'], ['sep', 9], ['configMode', 28], ['reload', 27],
  ['wand', 27], ['scan', 27], ['sep', 9], ['space', 1], ['free', 27, 'on'], ['subtree', 24], ['hide', 29],
  ['sep', 10], ['space', 5], ['combo', 188, 'TwinCAT Project8'], ['space', 8], ['combo', 187, '<ﾛｰｶﾙ>'],
  ['space', 7], ['overflow', 16], ['grip'], ['space', 6], ['comboOff', 188], ['space', 8], ['comboOff', 50],
  ['sep', 16], ['login', 24], ['playGrey', 26], ['stop', 28], ['logout', 28], ['sep', 9], ['stepIn', 28],
  ['stepOver', 27], ['stepOut', 26], ['cursor', 28], ['reset', 27], ['sep', 9], ['download', 27],
  ['upload', 27], ['exchange', 28], ['sep', 9], ['cycle', 27], ['cycle', 29], ['overflow', 16]
];

const explorerBar = [
  ['back', 27], ['forward', 27], ['home', 27], ['sync', 28], ['caret', 14], ['sep', 8], ['pending', 36],
  ['caret', 4], ['collapse', 34], ['sep', 4], ['wrench', 30], ['preview', 27, 'on']
];

const ToolItem = ({ item }) => {
  const [kind, width, value] = item;
  switch (kind) {
    case 'grip':
      return <Grip />;
    case 'space':
      return <Spacer $w={width} />;
    case 'sep':
      return <Divider $w={width} />;
    case 'text':
      return <ToolButton $w={width}>{value}</ToolButton>;
    case 'overflow':
      return <OverflowButton $w={width} aria-label="toolbar options"><Icon name="overflow" size={18} /></OverflowButton>;
    case 'combo':
    case 'comboOff':
      return (
        <ComboWrap $w={width}>
          <Combo disabled={kind === 'comboOff'} aria-label={value || 'list'}>
            <option>{value}</option>
          </Combo>
          <Icon name={kind === 'combo' ? 'caret' : 'caretGrey'} size={18} />
        </ComboWrap>
      );
    default:
      return (
        <ToolButton $w={width} $pressed={value === 'on'} aria-label={kind}>
          <Icon name={kind} size={kind.startsWith('caret') ? 18 : 20} />
        </ToolButton>
      );
  }
};

const BarDivider = styled(Divider)`
  height: 29px;
`;

/* ---------- tree ---------- */

// [level, state, icon, label]
const nodes = [
  [1, 'opened', 'measurement', 'TwinCAT Measurement Project6'],
  [2, 'opened', 'scopeProject', 'Scope YT NC Project'],
  [3, 'closed', 'dataPool', 'DataPool'],
  [3, 'openedWhite', 'chart', 'NC Axis 1'],
  [4, 'opened', 'axisGroup', 'Position absolute'],
  [5, 'none', 'chGreen', 'ActPos'],
  [5, 'none', 'chBlue', 'SetPos'],
  [4, 'opened', 'axisGroup', 'Position modulo'],
  [5, 'none', 'chOrange', 'ModuloActPos'],
  [5, 'none', 'chLime', 'ModuloSetPos'],
  [4, 'opened', 'axisGroup', 'Velocity'],
  [5, 'none', 'chSky', 'ActVelo'],
  [5, 'none', 'chPink', 'SetVelo'],
  [4, 'opened', 'axisGroup', 'Acceleration'],
  [5, 'none', 'chOlive', 'ActAcc'],
  [5, 'none', 'chCyan', 'SetAcc'],
  [4, 'opened', 'axisGroup', 'Position Lag'],
  [5, 'none', 'chBrown', 'PosDiff'],
  [3, 'none', 'trigger', 'Trigger'],
  [1, 'opened', 'tcProject', 'TwinCAT Project8'],
  [2, 'opened', 'system', 'SYSTEM'],
  [3, 'none', 'license', 'ライセンス'],
  [3, 'opened', 'realtime', 'リアルタイム'],
  [4, 'none', 'task', 'I/O Idle Task'],
  [3, 'none', 'taskAdd', 'タスク'],
  [3, 'none', 'route', 'ルート'],
  [3, 'none', 'typeSystem', 'Type System'],
  [3, 'none', 'object', 'TcCOMオブジェクト'],
  [2, 'opened', 'motion', 'MOTION'],
  [3, 'opened', 'ncTask', 'NC-Task 1 SAF'],
  [4, 'none', 'task', 'NC-Task 1 SVB'],
  [4, 'none', 'image', 'イメージ'],
  [4, 'none', 'tables', 'Tables'],
  [4, 'none', 'object', 'Objects'],
  [4, 'opened', 'axes', '軸'],
  [5, 'closed', 'axis', '軸 1'],
  [2, 'none', 'plc', 'PLC'],
  [2, 'opened', 'io', 'I/O'],
  [3, 'opened', 'devices', 'デバイス'],
  [4, 'opened', 'ethercat', 'デバイス 1 (EtherCAT)'],
  [5, 'none', 'image', 'イメージ'],
  [5, 'none', 'image', 'イメージ-Info'],
  [5, 'closed', 'syncUnit', 'SyncUnits']
];

// [icon, label, shortcut, state]
const contextItems = [
  ['ctxBrowser', 'Target Browser'],
  null,
  ['ctxMarker', 'Marker Window'],
  ['ctxTrigger', 'Trigger Window'],
  null,
  ['none', 'Change Ads Symbol...'],
  ['none', 'Change Index Group...'],
  null,
  ['ctxReport', 'Send Information Report...'],
  ['ctxTable', 'Create Marker Table'],
  null,
  ['ctxAxis', 'New Axis'],
  ['ctxTime', 'New Time Marker'],
  null,
  ['none', 'Stacked Axes', '', 'active'],
  null,
  ['copy', 'コピー(Y)', 'Ctrl+C'],
  ['paste', '貼り付け(P)', 'Ctrl+V', 'disabled'],
  ['ctxDelete', '削除(D)', 'Del'],
  ['ctxRename', '名前の変更(M)'],
  null,
  ['wrench', 'プロパティ(R)', 'Alt+Enter']
];

const Explorer = () => (
  <Panel>
    <PanelTitle>
      <span>ソリューション エクスプローラー</span>
      <Icon name="caretBig" size={12} />
      <Icon name="pin" size={14} />
      <Icon name="close" size={14} />
    </PanelTitle>
    <PanelTools>
      {explorerBar.map((item, i) => item[0] === 'sep'
        ? <BarDivider key={i} $w={item[1]} />
        : <ToolItem key={i} item={item} />)}
    </PanelTools>
    <Search>
      <input placeholder="ソリューション エクスプローラー の検索 (Ctrl+;)" />
      <Icon name="search" size={18} />
      <Icon name="caretGrey" size={18} />
    </Search>
    <TreeArea>
      <Tree>
        <RootRow>
          <Icon name="vs" size={18} />
          ソリューション 'TwinCAT Project8' (2 プロジェクト)
        </RootRow>
        {nodes.map(([level, state, icon, label], i) => (
          <TreeRow key={i} $level={level} $selected={state === 'openedWhite'}>
            <Icon name={state} size={14} />
            <Icon name={icon} />
            <span>{label}</span>
          </TreeRow>
        ))}
      </Tree>
      <ScrollBar>
        <svg width="12" height="8" viewBox="0 0 12 8"><path d="M0 7l6-7 6 7z" fill="#868999" /></svg>
        <Thumb />
      </ScrollBar>
    </TreeArea>
    <ContextMenu>
      {contextItems.map((item, i) => item ? (
        <ContextItem key={i} $active={item[3] === 'active'} disabled={item[3] === 'disabled'}>
          <Icon name={item[0]} />
          <span>{item[1]}</span>
          <span>{item[2]}</span>
        </ContextItem>
      ) : <ContextSeparator key={i} />)}
    </ContextMenu>
    <Pointers width="370" height="320" viewBox="13 310 370 320" fill="#ff1060">
      <path d="M13 316L100 330L96 322L119 344L89 353L95 345L14 318z" />
      <path d="M365 584L313 605L309 596L292 622L323 624L318 617L366 586z" />
    </Pointers>
  </Panel>
);

/* ---------- scope chart ---------- */

const TOP = 260;
const STEP = 91.5;
const LEFT = 1050;
const RIGHT = 1518;
const PERIOD = 176;
const START = 1106;
const ZERO = 718;

const axes = [
  ['Position absolute', 624, ['1.2', '1.05', '0.9', '0.75', '0.6', '0.45', '0.3', '0.15', '0.0', '-0.15', '-0.3']],
  ['Position modulo', 728, ['380.0', '342.0', '304.0', '266.0', '228.0', '190.0', '152.0', '114.0', '76.0', '38.0', '0.0']],
  ['Velocity', 832, ['2.5', '2.0', '1.5', '1.0', '0.5', '0.0', '-0.5', '-1.0', '-1.5', '-2.0', '-2.5']],
  ['Acceleration', 936, ['12.5', '10.0', '7.5', '5.0', '2.5', '0.0', '-2.5', '-5.0', '-7.5', '-10.0', '-12.5']],
  ['Position Lag', 1040, [
    '1.6 E-002', '1.2 E-002', '8.0 E-003', '4.0 E-003', '0.0', '-4.0 E-003',
    '-8.0 E-003', '-1.2 E-002', '-1.6 E-002', '-2.0 E-002', '-2.4 E-002'
  ]]
];

const seconds = ['0.000s', '1.428s', '2.857s', '4.285s', '5.714s', '7.142s', '8.571s', '10.000s'];

const toPath = points => points.map(([x, y], i) => `${i ? 'L' : 'M'}${x.toFixed(1)} ${y.toFixed(1)}`).join('');

// integral of the triangular acceleration profile, 0..1..0
const bump = u => {
  if (u <= 0 || u >= 1) return 0;
  const v = u < 0.5 ? u : 1 - u;
  return v < 0.25 ? 8 * v * v : 1 - 8 * (0.5 - v) * (0.5 - v);
};

const velocityAt = x => ZERO - 418 * bump((x - 1104) / 39) + 418 * bump((x - 1192) / 39);

const setVelocity = () => {
  const points = [];
  for (let x = START - 2; x <= START + PERIOD; x += 1) points.push([x, velocityAt(x)]);
  return points;
};

const actVelocity = () => {
  const points = [];
  let side = 1;
  for (let x = START - 2; x <= START + PERIOD; x += 0.5) {
    const y = velocityAt(x - 1);
    const level = Math.abs(ZERO - y) / 418;
    const swing = (level > 0.04 ? 10 : 0) + 38 * level * (1.35 - level) + 2 * level;
    const creep = x > 1143 && x < 1158 ? -4 + (x - 1143) * 0.2 : 0;
    points.push([x, y + creep + side * swing]);
    side = -side;
  }
  return points;
};

// fills the range between neighbouring [x, top, bottom] triples with a fast oscillation
const oscillate = triples => {
  const points = [];
  triples.slice(1).forEach(([x1, t1, b1], i) => {
    const [x0, t0, b0] = triples[i];
    const count = Math.max(2, Math.round((x1 - x0) / 0.5));
    for (let k = 0; k < count; k += 1) {
      const f = k / count;
      const x = x0 + (x1 - x0) * f;
      points.push([x, k % 2 ? t0 + (t1 - t0) * f : b0 + (b1 - b0) * f]);
    }
  });
  return points;
};

const lag = [
  [1105, 619], [1107, 560], [1109, 352], [1110, 540], [1111, 643], [1112, 430],
  ...oscillate([
    [1113, 395, 600], [1115, 417, 560], [1117, 430, 530], [1119, 430, 510], [1120, 450, 500], [1121, 406, 480],
    [1123, 410, 483], [1125, 418, 485], [1128, 424, 517], [1130, 405, 543], [1132, 395, 577], [1134, 425, 627],
    [1136, 473, 675], [1137, 480, 690]
  ]),
  [1137.5, 480], [1138, 757], [1139, 640], [1140, 530], [1141.5, 512], [1143, 520], [1147, 560], [1153, 603], [1158, 630], [1189, 631],
  [1191, 627], [1193, 631], [1195, 673], [1196, 737], [1198, 813], [1199, 1098],
  ...oscillate([
    [1200, 850, 1050], [1201, 800, 1028], [1203, 790, 960], [1205, 782, 920], [1207, 793, 873], [1209, 802, 880],
    [1212, 790, 867], [1215, 763, 840], [1218, 730, 858], [1220, 697, 845], [1221, 640, 842], [1224, 558, 820],
    [1227, 464, 805], [1228, 520, 740]
  ]),
  [1229, 600], [1231, 610], [1237, 610], [1238, 612], [1245, 612], [1246, 615], [1255, 615], [1256, 617],
  [1267, 617], [1268, 619], [1281, 619]
];

const position = [
  [1106, 992], [1108, 986], [1112, 957], [1117, 880], [1122, 733], [1127, 583], [1129, 517], [1135, 423], [1138, 390],
  [1140, 384], [1143, 382], [1191, 382], [1195, 387], [1200, 420], [1205, 493], [1207, 563], [1210, 637], [1213, 733],
  [1215, 767], [1217, 850], [1221, 923], [1224, 963], [1228, 992], [1282, 992]
];

const actPosition = position.map(([x, y]) => {
  if (x > 1137 && x < 1144) return [x + 1, y + 5];
  if (x === 1191) return [x + 2, y];
  return [x + 1, y];
});
actPosition.splice(actPosition.findIndex(([x]) => x > 1150), 0, [1150, 385], [1158, 382]);

const acceleration = [
  [1104, ZERO], [1113, 335], [1124, ZERO], [1133, 1100], [1143, ZERO], [1191, ZERO], [1200, 1101], [1211, ZERO],
  [1221, 336], [1231, ZERO], [1280, ZERO]
];

const traces = [
  ['#008000', actPosition],
  ['#0000ff', position],
  ['#ffa500', [[1106, 1175], [1228, 1175], [1228, 309], [1282, 309], [1282, 1175]]],
  ['#32dc14', [[1106, 1175], [1115, 1175], [1129, 1173], [1198, 1173], [1220, 1175], [1282, 1175]]],
  ['#1e90ff', actVelocity()],
  ['#ff00ff', setVelocity()],
  ['#808000', [[1106, ZERO], [1282, ZERO]]],
  ['#00ffff', acceleration],
  ['#a52a2a', lag]
];

const TimeChart = () => {
  const bottom = TOP + STEP * 10;
  const rows = Array.from({ length: 11 }, (_, i) => Math.round(TOP + STEP * i) + 0.5);
  const columns = seconds.map((_, i) => Math.round(LEFT + (RIGHT - LEFT) * i / 7) + 0.5);

  return (
    <Chart viewBox="521 246 1028 969" preserveAspectRatio="xMinYMin meet">
      <rect x="1045" y="255" width="478" height="925" fill="#fff" />
      {axes.map(([name, x, labels]) => (
        <g key={name}>
          <path
            d={`M${x + 0.5} ${TOP}V${bottom + 1}${rows.map(y => `M${x - 5} ${y}h5`).join('')}`}
            stroke="#000"
            fill="none"
          />
          {labels.map((label, i) => label.split(' ').map((part, k, parts) => (
            <text key={part} x={x - 8} y={rows[i] + 4 + (parts.length > 1 ? k * 16 - 8 : 0)} textAnchor="end">
              {part}
            </text>
          )))}
          <text
            transform={`translate(${x - 80} ${ZERO}) rotate(-90)`}
            textAnchor="middle"
            fontFamily="'DejaVu Sans Condensed', 'DejaVu Sans', sans-serif"
          >
            {name}
          </text>
        </g>
      ))}
      <clipPath id="plot">
        <rect x={LEFT} y="255" width="368" height="925" />
      </clipPath>
      <g clipPath="url(#plot)" fill="none" strokeWidth="1.5" strokeLinejoin="bevel">
        {traces.map(([color, points]) => [-1, 0, 1].map(cycle => (
          <path key={color + cycle} d={toPath(points)} stroke={color} transform={`translate(${cycle * PERIOD} 0)`} />
        )))}
      </g>
      <path
        d={rows.map(y => `M${LEFT} ${y}H${RIGHT}`).join('') + columns.map(x => `M${x} ${TOP}V${bottom}`).join('')}
        stroke="#000"
        strokeDasharray="1 1"
        shapeRendering="crispEdges"
        fill="none"
      />
      <path d={`M${LEFT} 1185.5H${RIGHT + 1}${columns.map(x => `M${x} 1185v6`).join('')}`} stroke="#000" fill="none" />
      {seconds.map((label, i) => (
        <text key={label} x={columns[i]} y="1204" textAnchor="middle">{label}</text>
      ))}
    </Chart>
  );
};

const statusItems = [
  ['Start:', '10:49:28.579:000', 148], ['End:', '10:49:36.463:000', 145], ['Pos:', '0.00:00:00.000:000', 155],
  ['Time:', '10:49:28.579:000', 147], ['Date:', '2021年7月2日', 138]
];

const TabHead = ({ title }) => (
  <DocTab>
    {title}
    <Icon name="pinSide" size={14} />
    <Icon name="close" size={14} />
  </DocTab>
);

const ScopeIcons = ({ names }) => names.map(name => (
  <ScopeButton key={name} $active={name === 'scPan'} aria-label={name}>
    <Icon name={name} size={name === 'scWidth' ? 14 : 17} />
  </ScopeButton>
));

const Scope = () => (
  <Doc>
    <DocTabs>
      <TabHead title="Scope YT NC Project*" />
      <Icon name="caretWhite" size={12} />
    </DocTabs>
    <ScopeBody>
      <ChartTabs>
        <ChartTab>NC Axis 1</ChartTab>
        <span>
          <Icon name="arrowLeft" size={14} />
          <Icon name="arrowRight" size={14} />
        </span>
      </ChartTabs>
      <ScopeStatus>
        {statusItems.map(([name, value, width]) => (
          <StatusItem key={name} $w={width}>{name}<span>{value}</span></StatusItem>
        ))}
      </ScopeStatus>
      <ScopeTools>
        <ScopeIcons names={['scPlay', 'scPause']} />
        <ScopeDivider />
        <TimeInput $right aria-label="display width" defaultValue="0.00:00:10.000:000" />
        <ScopeDivider />
        <ScopeIcons names={['scFirst', 'scPrev', 'scNext', 'scLast']} />
        <ScopeDivider />
        <TimeInput aria-label="position" defaultValue="0.00:00:00.000:000" />
        <ScopeDivider />
        <ScopeIcons names={['scUndo', 'scRedo']} />
        <ScopeDivider />
        <ScopeIcons
          names={['scWidth', 'scPan', 'scZoomX', 'scZoomXY', 'scZoomOff', 'scZoomMax', 'scCursor', 'scClip']}
        />
      </ScopeTools>
      <TimeChart />
    </ScopeBody>
  </Doc>
);

/* ---------- axis page ---------- */

const pageTabs = [
  ['一般', 60], ['設定', 60], ['ﾊﾟﾗﾒｰﾀ', 60], [<>加減速特性(<u>D</u>)</>, 108], ['オンライン', 65],
  [<>機能(<u>F</u>)</>, 63, true], [<>結合(<u>C</u>)</>, 59], ['補償', 58]
];

const Select = ({ id, value, label }) => (
  <DropWrap $w={164}>
    <Drop id={id} aria-label={label}>
      <option>{value}</option>
    </Drop>
    <Icon name="chevron" size={18} />
  </DropWrap>
);

const Row = ({ id, caption, value, unit, select, children }) => (
  <>
    <Caption htmlFor={id}>{caption}</Caption>
    {select ? <Select id={id} value={value} /> : <TextBox id={id} defaultValue={value} />}
    <Unit>{unit}</Unit>
    {children || <span />}
  </>
);

const SetGroup = ({ title }) => (
  <Group $pad="4px 13px 7px">
    <legend>{title}</legend>
    <Select value="絶対値" label={title} />
    <TextBox defaultValue="0" aria-label={title} />
    <span />
    <PushButton>設定</PushButton>
  </Group>
);

const AxisPage = () => (
  <Doc>
    <DocTabs>
      <TabHead title="TwinCAT Project8" />
    </DocTabs>
    <AxisBody>
      <PageTabs>
        {pageTabs.map(([label, width, active], i) => (
          <PageTab key={i} $w={width} $active={active}>{label}</PageTab>
        ))}
      </PageTabs>
      <Page>
        <Readout>
          <Stripe>
            <svg width="32" height="32" viewBox="0 0 32 32">
              <rect width="32" height="32" fill="#ffcc00" />
              <path d="M0 0h6l26 13v16L0 13zM0 30l4 2H0z" fill="#000" />
            </svg>
          </Stripe>
          <Position>-0.0004</Position>
          <Field $w={170}>
            <span>目標位置:</span>
            <span>[mm]</span>
            <TextBox $right defaultValue="0.0000" />
          </Field>
        </Readout>
        <Group $pad="7px 13px 6px" $after={6}>
          <legend>動作設定</legend>
          <Row id="mode" caption="動作モード:" value="Reversing Sequence" select>
            <PushButton disabled>開始(<u>S</u>)</PushButton>
          </Row>
          <Row id="target1" caption="ターゲット位置1:" value="1" unit="[mm]">
            <PushButton>停止(<u>t</u>)</PushButton>
          </Row>
          <Row id="speed" caption="ターゲット速度:" value="30" unit="[mm/s]" />
          <Row id="target2" caption="ターゲット位置2:" value="0" unit="[mm]" />
          <Row id="idle" caption="Idle Time:" value="1" unit="s">
            <Duration $w={126}>
              <span>持続時間:</span>
              <span>[s]</span>
              <TextBox $right defaultValue="0.87200" />
            </Duration>
          </Row>
        </Group>
        <Group $pad="1px 13px 6px" $after={4}>
          <legend>直接ドライブ出力</legend>
          <Row id="output" caption="出力モード:" value="パーセント" select>
            <PushButton>Ch<u>a</u>nge</PushButton>
          </Row>
          <Row id="level" caption="出力値:" value="0" unit="[%]">
            <PushButton>停止(<u>o</u>)</PushButton>
          </Row>
        </Group>
        <SetGroup title="現在位置の設定" />
        <SetGroup title="目標位置の設定" />
      </Page>
    </AxisBody>
  </Doc>
);

class App extends Component {

  render() {
    return (
      <Desktop>
        <GlobalStyle />
        <Window>
          <Header>
            <TitleBar>
              <Icon name="logo" size={25} />
              TwinCAT Project8 - TcXaeShell
            </TitleBar>
            <MenuBar>
              {menus.map(([label, width]) => <MenuButton key={label} $w={width}>{label}</MenuButton>)}
            </MenuBar>
            <ToolRow>
              {standardBar.map((item, i) => <ToolItem key={i} item={item} />)}
            </ToolRow>
            <ToolRow>
              {twincatBar.map((item, i) => <ToolItem key={i} item={item} />)}
            </ToolRow>
          </Header>
          <Workspace>
            <Explorer />
            <DocumentArea>
              <Documents>
                <Scope />
                <AxisPage />
              </Documents>
              <BottomDock>エラー一覧</BottomDock>
            </DocumentArea>
          </Workspace>
        </Window>
      </Desktop>
    );
  }
}

export default App;
